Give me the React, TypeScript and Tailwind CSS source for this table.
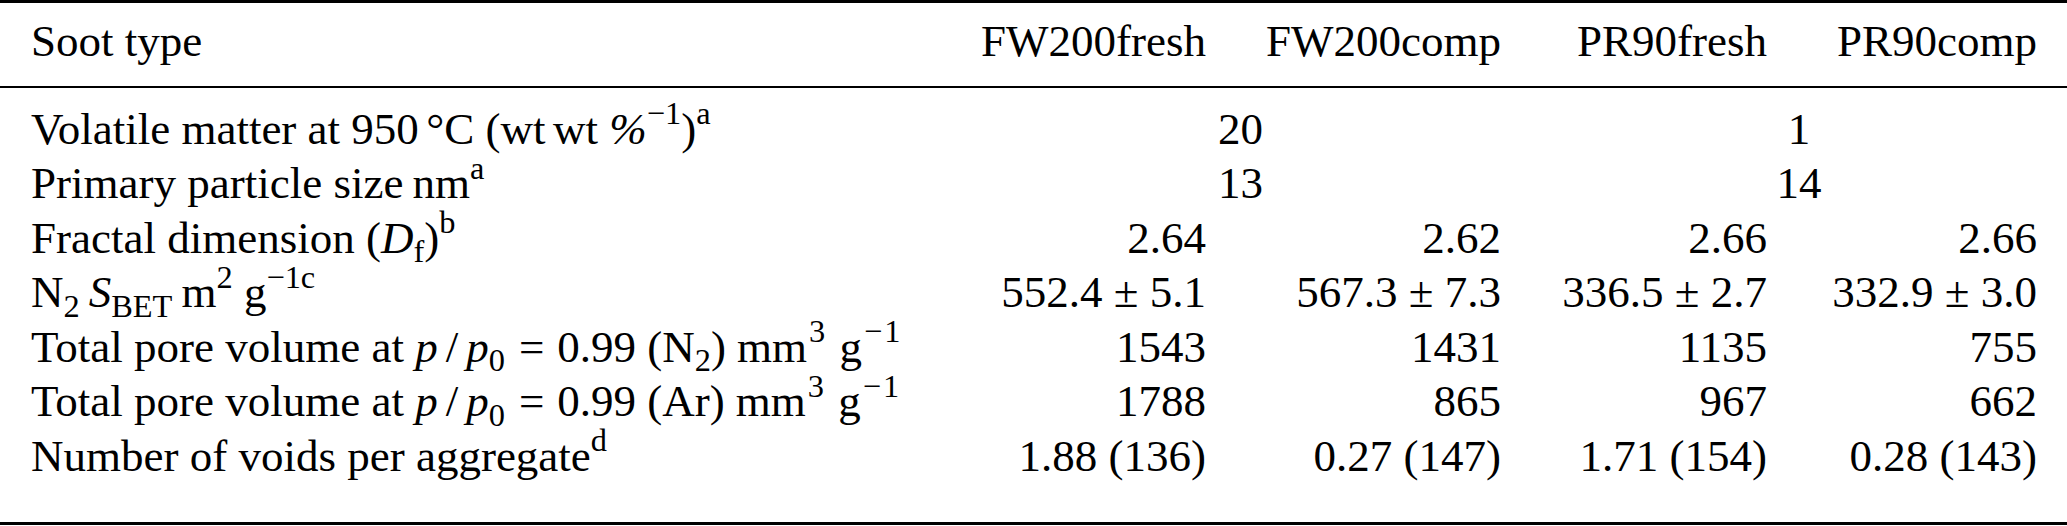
import React from "react";

// column grid shared by header and body rows
const GRID = "grid grid-cols-[950px_286px_295px_266px_270px]";

type Row = {
  label: React.ReactNode;
  values?: string[];
  spans?: [string, string];
};

const Sup: React.FC<{ children: React.ReactNode; className?: string }> = ({
  children,
  className = "",
}) => <sup className={`text-[72%] top-[-0.6em] ${className}`}>{children}</sup>;

const Sub: React.FC<{ children: React.ReactNode; className?: string }> = ({
  children,
  className = "",
}) => <sub className={`text-[72%] bottom-[-0.3em] ${className}`}>{children}</sub>;

// p/p0 = 0.99 with math-like spacing
const Ratio: React.FC = () => (
  <>
    <i>p</i>
    <span className="mx-[8px]">/</span>
    <i>p</i>
    <Sub className="mr-[1px]">0</Sub>
    <span className="mx-[13px]">=</span>0.99
  </>
);

// "mm3 g−1" unit, slightly looser like the math typesetting
const Unit: React.FC = () => (
  <>
    <span className="ml-[2px]">mm</span>
    <Sup className="ml-[2px] mr-[3px]">3</Sup> g
    <Sup className="ml-[2px] tracking-[2px]">−1</Sup>
  </>
);

const ROWS: Row[] = [
  {
    label: (
      <>
        Volatile matter at 950{"\u2006"}°C (wt{"\u2006"}wt <i>%</i>
        <Sup>−1</Sup>)<Sup>a</Sup>
      </>
    ),
    spans: ["20", "1"],
  },
  {
    label: (
      <>
        Primary particle size{"\u2009"}nm<Sup>a</Sup>
      </>
    ),
    spans: ["13", "14"],
  },
  {
    label: (
      <>
        Fractal dimension (<i>D</i>
        <Sub>f</Sub>)<Sup>b</Sup>
      </>
    ),
    values: ["2.64", "2.62", "2.66", "2.66"],
  },
  {
    label: (
      <>
        N<Sub>2</Sub>
        {"\u2009"}
        <i>S</i>
        <Sub>BET</Sub>
        {"\u2009"}m<Sup>2</Sup> g<Sup>−1c</Sup>
      </>
    ),
    values: ["552.4 ± 5.1", "567.3 ± 7.3", "336.5 ± 2.7", "332.9 ± 3.0"],
  },
  {
    label: (
      <>
        Total pore volume at <Ratio /> (N<Sub>2</Sub>){"\u2009"}
        <Unit />
      </>
    ),
    values: ["1543", "1431", "1135", "755"],
  },
  {
    label: (
      <>
        Total pore volume at <Ratio /> (Ar){"\u2009"}
        <Unit />
      </>
    ),
    values: ["1788", "865", "967", "662"],
  },
  {
    label: (
      <>
        Number of voids per aggregate<Sup>d</Sup>
      </>
    ),
    values: ["1.88 (136)", "0.27 (147)", "1.71 (154)", "0.28 (143)"],
  },
];

const HEAD = ["FW200fresh", "FW200comp", "PR90fresh", "PR90comp"];

export default function App() {
  return (
    <div className="w-[2067px] h-[526px] bg-white text-black font-['Liberation_Serif',serif] text-[45px] leading-[54.5px]">
      <div className="border-t-[3px] border-black">
        <div className={`${GRID} pt-[11px] pb-[17px] border-b-2 border-black`}>
          <div className="pl-[31px] whitespace-nowrap">Soot type</div>
          {HEAD.map((h) => (
            <div key={h} className="px-[30px] text-right whitespace-nowrap">
              {h}
            </div>
          ))}
        </div>
        <div className="pt-[14px] pb-[39px] border-b-[3px] border-black">
          {ROWS.map((row, i) => (
            <div key={i} className={GRID}>
              <div className="pl-[31px] whitespace-nowrap">{row.label}</div>
              {row.spans ? (
                <>
                  <div className="col-span-2 px-[30px] text-center">{row.spans[0]}</div>
                  <div className="col-span-2 px-[30px] text-center">{row.spans[1]}</div>
                </>
              ) : (
                row.values?.map((v, j) => (
                  <div key={j} className="px-[30px] text-right whitespace-nowrap">
                    {v}
                  </div>
                ))
              )}
            </div>
          ))}
        </div>
      </div>
    </div>
  );
}
